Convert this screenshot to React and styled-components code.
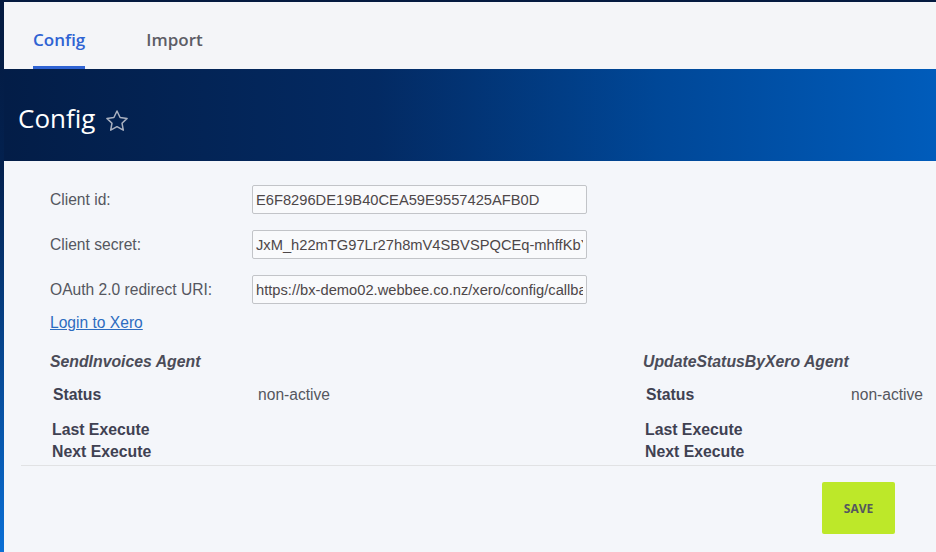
import React from "react";
import styled, { createGlobalStyle } from "styled-components";

const GlobalStyle = createGlobalStyle`
  html, body {
    margin: 0;
    padding: 0;
  }
  body {
    font-family: "Liberation Sans", Arial, sans-serif;
    background: linear-gradient(180deg, #041a40 0px, #03214f 170px, #0a6fd6 552px);
    min-height: 100vh;
  }
`;

const Page = styled.div`
  min-height: 100vh;
  padding: 2px 0 0 4px;
  box-sizing: border-box;
  display: flex;
  flex-direction: column;
`;

const TabBar = styled.nav`
  height: 67px;
  background: #f4f5f8;
  display: flex;
  align-items: stretch;
  padding-left: 29px;
  gap: 61px;
`;

const Tab = styled.div`
  display: flex;
  align-items: center;
  font-family: "Open Sans", sans-serif;
  font-weight: 600;
  font-size: 17px;
  color: ${(p) => (p.$active ? "#2f63d3" : "#5d5d66")};
  border-bottom: 3px solid ${(p) => (p.$active ? "#2f63d3" : "transparent")};
  padding-top: 11px;
`;

const Hero = styled.header`
  height: 92px;
  display: flex;
  align-items: center;
  gap: 10px;
  padding: 8px 0 0 14px;
  box-sizing: border-box;
  background: linear-gradient(90deg, #031d47 0%, #032a63 40%, #004797 70%, #005cbb 100%);
`;

const Title = styled.h1`
  margin: 0;
  font-family: "Open Sans", sans-serif;
  font-weight: 400;
  font-size: 26px;
  color: #ffffff;
  line-height: 1;
  padding-bottom: 2px;
`;

const StarIcon = styled.svg`
  width: 24px;
  height: 24px;
  margin-top: 4px;
`;

const Panel = styled.main`
  flex: 1;
  background: #f4f6fa;
  padding-top: 24px;
`;

const Form = styled.div`
  display: grid;
  grid-template-columns: 202px 335px;
  row-gap: 16px;
  padding-left: 46px;
`;

const Label = styled.label`
  display: flex;
  align-items: center;
  font-size: 15.6px;
  color: #555760;
`;

const Input = styled.input`
  height: 29px;
  box-sizing: border-box;
  border: 1px solid #c2c4c8;
  border-radius: 2px;
  background: #f9fafc;
  padding: 0 3px;
  font-family: "Liberation Sans", Arial, sans-serif;
  font-size: 14.7px;
  color: #4d4749;
  outline: none;
`;

const LoginLink = styled.a`
  display: block;
  margin: 10px 0 0 46px;
  font-size: 15.6px;
  line-height: 18px;
  color: #2d6cc0;
  text-decoration: underline;
  width: max-content;
`;

const Agents = styled.div`
  display: flex;
  justify-content: space-between;
  padding: 21px 13px 0 46px;
`;

const Agent = styled.section`
  width: 280px;
`;

const AgentTitle = styled.div`
  font-size: 15.8px;
  line-height: 18px;
  font-weight: bold;
  font-style: italic;
  color: #4b4c58;
`;

const StatusRow = styled.div`
  display: flex;
  justify-content: space-between;
  margin-top: 15px;
  padding-left: 3px;
  font-size: 15.8px;
  line-height: 18px;
`;

const Key = styled.span`
  font-weight: bold;
  color: #3f4152;
`;

const Value = styled.span`
  font-size: 15.6px;
  color: #55565e;
`;

const ExecList = styled.div`
  margin-top: 15px;
  padding-left: 2px;
  font-size: 15.8px;
  line-height: 22px;
  font-weight: bold;
  color: #3f4152;
`;

const Divider = styled.hr`
  margin: 2px 0 0 17px;
  border: 0;
  border-top: 1px solid #e1e2e4;
`;

const Footer = styled.div`
  display: flex;
  justify-content: flex-end;
  padding: 16px 41px 0 0;
`;

const SaveButton = styled.button`
  width: 73px;
  height: 52px;
  border: 0;
  border-radius: 2px;
  background: #bde829;
  font-family: "Open Sans", sans-serif;
  font-weight: 700;
  font-size: 12px;
  color: #55575f;
  cursor: pointer;
`;

const fields = [
  { label: "Client id:", value: "E6F8296DE19B40CEA59E9557425AFB0D" },
  { label: "Client secret:", value: "JxM_h22mTG97Lr27h8mV4SBVSPQCEq-mhffKbYtQ" },
  { label: "OAuth 2.0 redirect URI:", value: "https://bx-demo02.webbee.co.nz/xero/config/callback" },
];

const agents = ["SendInvoices Agent", "UpdateStatusByXero Agent"];

export default function App() {
  return (
    <>
      <GlobalStyle />
      <Page>
        <TabBar>
          <Tab $active>Config</Tab>
          <Tab>Import</Tab>
        </TabBar>
        <Hero>
          <Title>Config</Title>
          <StarIcon viewBox="0 0 24 24" fill="none" stroke="#aab1c0" strokeWidth="1.5" strokeLinejoin="round">
            <path d="M12 2l3.1 6.5 7 .9-5.1 4.8 1.3 7L12 17.7l-6.3 3.5 1.3-7L1.9 9.4l7-.9z" />
          </StarIcon>
        </Hero>
        <Panel>
          <Form>
            {fields.map((f) => (
              <React.Fragment key={f.label}>
                <Label>{f.label}</Label>
                <Input defaultValue={f.value} readOnly />
              </React.Fragment>
            ))}
          </Form>
          <LoginLink href="#">Login to Xero</LoginLink>
          <Agents>
            {agents.map((name) => (
              <Agent key={name}>
                <AgentTitle>{name}</AgentTitle>
                <StatusRow>
                  <Key>Status</Key>
                  <Value>non-active</Value>
                </StatusRow>
                <ExecList>
                  <div>Last Execute</div>
                  <div>Next Execute</div>
                </ExecList>
              </Agent>
            ))}
          </Agents>
          <Divider />
          <Footer>
            <SaveButton>SAVE</SaveButton>
          </Footer>
        </Panel>
      </Page>
    </>
  );
}
